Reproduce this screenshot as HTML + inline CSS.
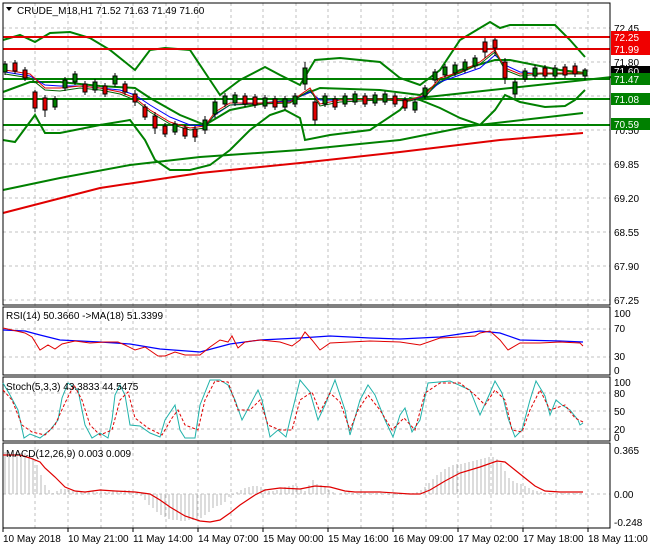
<!DOCTYPE html>
<html><head><style>
body{margin:0;background:#fff;}
svg{display:block;font-family:"Liberation Sans",sans-serif;font-size:10px;}
</style></head><body>
<svg width="650" height="550" xmlns="http://www.w3.org/2000/svg">
<rect width="650" height="550" fill="#fff"/>
<g stroke="#c0c0c0" stroke-dasharray="3,3" stroke-width="1">
<path d="M35 3V528M68 3V528M101 3V528M133 3V528M166 3V528M198 3V528M231 3V528M263 3V528M296 3V528M328 3V528M361 3V528M393 3V528M426 3V528M458 3V528M491 3V528M523 3V528M556 3V528M588 3V528"/>
<path d="M3 28H610M3 62H610M3 96H610M3 130H610M3 164H610M3 198H610M3 232H610M3 266H610M3 300H610"/>
<path d="M3 329H610M3 357H610M3 393H610M3 411H610M3 429H610M3 494H610"/>
</g>
<g fill="none" stroke-width="2">
<polyline stroke="#e00000" points="3,213 100,188 200,173 300,163 400,152 500,140 583,133"/>
<polyline stroke="#008000" points="3,190 60,178 130,165 200,157 300,150 400,140 470,126 583,113"/>
<polyline stroke="#008000" points="400,100 612,77"/>
<polyline stroke="#008000" points="3,40 20,35 35,42 50,33 70,32 90,38 110,50 135,70 150,50 165,48 190,50 210,80 220,95 240,80 265,67 280,75 300,85 315,60 340,58 380,62 400,78 420,85 440,70 460,40 480,28 490,22 500,28 510,25 555,25 570,40 585,57"/>
<polyline stroke="#008000" points="3,140 15,142 35,115 45,133 60,133 100,125 130,120 145,140 155,160 170,170 190,170 210,165 230,150 250,130 270,115 285,110 300,118 305,140 330,135 370,130 400,110 410,98 420,100 440,108 460,118 480,125 495,110 505,95 520,102 545,107 565,106 575,100 585,90"/>
<polyline stroke="#008000" points="3,92 30,82 60,82 100,86 135,88 150,98 180,115 205,125 230,110 260,104 290,100 320,88 380,90 420,95 460,70 495,60 510,60 560,70 585,73"/>
<path stroke="#e00000" stroke-width="2" d="M3 37H610M3 49H610"/>
<path stroke="#008000" stroke-width="2" d="M3 79H610M3 99H610M3 125H610"/>
<polyline stroke="#0000ff" stroke-width="1" points="5,72 30,76 45,85 60,86 80,86 100,88 120,90 135,95 150,105 170,117 190,125 205,126 215,115 230,105 260,103 290,101 310,92 320,100 340,100 380,99 410,100 425,96 440,82 460,75 480,68 495,55 505,65 520,72 540,74 583,74"/>
<polyline stroke="#e00000" stroke-width="1" points="5,70 30,74 45,88 60,88 80,86 100,88 120,92 135,98 150,110 170,122 190,128 205,126 215,112 230,103 260,103 290,102 310,88 320,104 340,100 380,99 410,100 425,95 440,78 460,72 480,62 495,50 505,68 520,74 540,73 583,73"/>
<polyline stroke="#006400" stroke-width="1" points="5,74 30,78 45,90 60,91 80,88 100,90 120,94 135,100 150,112 170,124 190,130 205,128 215,114 230,105 260,104 290,103 310,90 320,106 340,102 380,100 410,101 425,97 440,80 460,73 480,64 495,52 505,70 520,76 540,74 583,74"/>
</g>
<g stroke="#000" stroke-width="1">
<path d="M5 61V75M15 60V74M25 67V81M35 90V112M45 95V117M55 96V110M65 77V91M75 71V85M85 81V95M95 79V93M105 83V97M115 73V87M125 81V95M135 90V106M145 104V120M155 112V134M165 123V137M175 121V135M185 125V139M195 126V142M205 116V134M215 98V118M225 93V107M235 92V106M245 93V107M255 94V108M265 95V109M275 96V110M285 96V110M295 93V107M305 62V90M315 98V125M325 93V107M335 96V110M345 93V107M355 91V105M365 93V107M375 92V106M385 91V105M395 93V107M405 97V111M415 99V113M425 85V99M435 69V83M445 64V78M455 62V76M465 59V73M475 55V69M485 38V58M495 38V56M505 58V84M515 78V98M525 68V82M535 65V79M545 65V79M555 65V79M565 64V78M575 63V77M585 68V80"/>
</g>
<g stroke="#000" stroke-width="1">
<rect x="3" y="64" width="4" height="8" fill="#008000"/><rect x="13" y="63" width="4" height="8" fill="#e00000"/><rect x="23" y="70" width="4" height="8" fill="#e00000"/><rect x="33" y="92" width="4" height="16" fill="#e00000"/><rect x="43" y="98" width="4" height="12" fill="#e00000"/><rect x="53" y="99" width="4" height="8" fill="#008000"/><rect x="63" y="80" width="4" height="8" fill="#008000"/><rect x="73" y="74" width="4" height="8" fill="#008000"/><rect x="83" y="84" width="4" height="8" fill="#e00000"/><rect x="93" y="82" width="4" height="8" fill="#008000"/><rect x="103" y="86" width="4" height="8" fill="#e00000"/><rect x="113" y="76" width="4" height="8" fill="#008000"/><rect x="123" y="84" width="4" height="8" fill="#e00000"/><rect x="133" y="94" width="4" height="8" fill="#e00000"/><rect x="143" y="107" width="4" height="10" fill="#e00000"/><rect x="153" y="116" width="4" height="12" fill="#e00000"/><rect x="163" y="126" width="4" height="8" fill="#e00000"/><rect x="173" y="124" width="4" height="8" fill="#008000"/><rect x="183" y="128" width="4" height="8" fill="#e00000"/><rect x="193" y="129" width="4" height="8" fill="#e00000"/><rect x="203" y="120" width="4" height="10" fill="#008000"/><rect x="213" y="102" width="4" height="12" fill="#008000"/><rect x="223" y="96" width="4" height="8" fill="#008000"/><rect x="233" y="95" width="4" height="8" fill="#008000"/><rect x="243" y="96" width="4" height="8" fill="#e00000"/><rect x="253" y="97" width="4" height="8" fill="#e00000"/><rect x="263" y="98" width="4" height="8" fill="#008000"/><rect x="273" y="99" width="4" height="8" fill="#e00000"/><rect x="283" y="99" width="4" height="8" fill="#008000"/><rect x="293" y="96" width="4" height="8" fill="#008000"/><rect x="303" y="68" width="4" height="16" fill="#008000"/><rect x="313" y="102" width="4" height="18" fill="#e00000"/><rect x="323" y="96" width="4" height="8" fill="#008000"/><rect x="333" y="99" width="4" height="8" fill="#e00000"/><rect x="343" y="96" width="4" height="8" fill="#008000"/><rect x="353" y="94" width="4" height="8" fill="#008000"/><rect x="363" y="96" width="4" height="8" fill="#e00000"/><rect x="373" y="95" width="4" height="8" fill="#008000"/><rect x="383" y="94" width="4" height="8" fill="#008000"/><rect x="393" y="96" width="4" height="8" fill="#e00000"/><rect x="403" y="100" width="4" height="8" fill="#e00000"/><rect x="413" y="102" width="4" height="8" fill="#008000"/><rect x="423" y="88" width="4" height="8" fill="#008000"/><rect x="433" y="72" width="4" height="8" fill="#008000"/><rect x="443" y="67" width="4" height="8" fill="#008000"/><rect x="453" y="65" width="4" height="8" fill="#008000"/><rect x="463" y="62" width="4" height="8" fill="#008000"/><rect x="473" y="58" width="4" height="8" fill="#008000"/><rect x="483" y="42" width="4" height="10" fill="#e00000"/><rect x="493" y="40" width="4" height="8" fill="#e00000"/><rect x="503" y="62" width="4" height="16" fill="#e00000"/><rect x="513" y="82" width="4" height="12" fill="#008000"/><rect x="523" y="71" width="4" height="8" fill="#008000"/><rect x="533" y="68" width="4" height="8" fill="#008000"/><rect x="543" y="68" width="4" height="8" fill="#e00000"/><rect x="553" y="68" width="4" height="8" fill="#008000"/><rect x="563" y="67" width="4" height="8" fill="#e00000"/><rect x="573" y="66" width="4" height="8" fill="#e00000"/><rect x="583" y="70" width="4" height="6" fill="#008000"/>
</g>
<path d="M3 3H610V305H3Z" fill="none" stroke="#000"/>
<path d="M6 7l3 4 3-4z" fill="#000"/>
<text x="17" y="14" font-size="10">CRUDE_M18,H1  71.52 71.63 71.49 71.60</text>
<g font-size="10" fill="#000">
<text x="614" y="32">72.45</text>
<text x="614" y="66">71.80</text>
<text x="614" y="168">69.85</text>
<text x="614" y="202">69.20</text>
<text x="614" y="236">68.55</text>
<text x="614" y="270">67.90</text>
<text x="614" y="304">67.25</text>
<text x="614" y="134">70.50</text>
</g>
<rect x="611" y="31" width="39" height="12" fill="#f00000"/><text x="614" y="41" fill="#fff">72.25</text>
<rect x="611" y="43" width="39" height="12" fill="#f00000"/><text x="614" y="53" fill="#fff">71.99</text>
<rect x="611" y="66" width="39" height="11" fill="#000"/><text x="614" y="75" fill="#fff">71.60</text>
<rect x="611" y="73" width="39" height="12" fill="#008000"/><text x="614" y="83" fill="#fff">71.47</text>
<rect x="611" y="93" width="39" height="12" fill="#008000"/><text x="614" y="103" fill="#fff">71.08</text>
<rect x="611" y="118" width="39" height="12" fill="#008000"/><text x="614" y="128" fill="#fff">70.59</text>

<!-- RSI -->
<path d="M3 307H610V375H3Z" fill="none" stroke="#000"/>
<text x="6" y="319">RSI(14) 50.3660  -&gt;MA(18) 51.3399</text>
<polyline fill="none" stroke="#0000ff" stroke-width="1.2" points="3,330 25,331 40,335 60,340 100,342 130,344 160,349 200,352 230,344 260,340 300,338 330,336 370,338 400,339 440,337 480,331 500,333 520,340 560,341 583,342"/>
<polyline fill="none" stroke="#e00000" stroke-width="1" points="3,328 12,330 25,333 32,337 40,350 48,345 55,349 62,344 75,341 90,343 105,342 118,342 125,345 135,350 145,347 158,356 165,356 175,352 185,355 200,355 210,347 220,340 228,342 232,336 238,348 245,342 260,340 280,342 292,346 300,340 305,332 312,340 320,350 330,343 350,342 370,341 400,342 420,345 440,338 460,337 475,336 480,333 490,331 500,340 508,350 520,343 540,343 560,342 580,343 583,346"/>
<g font-size="10"><text x="614" y="317">100</text><text x="614" y="332">70</text><text x="614" y="360">30</text><text x="614" y="374">0</text></g>

<!-- Stoch -->
<path d="M3 377H610V441H3Z" fill="none" stroke="#000"/>
<polyline fill="none" stroke="#20b2aa" stroke-width="1" points="3,383 10,395 18,410 24,438 30,434 40,438 50,430 58,420 62,398 68,383 78,390 85,425 92,438 100,433 108,438 112,420 115,395 120,385 125,395 130,425 140,426 150,433 160,437 165,420 175,405 180,430 185,438 195,438 200,405 210,380 220,380 228,385 235,400 242,420 250,405 258,390 262,400 270,437 278,430 286,437 290,420 300,380 310,392 318,420 325,405 335,380 345,410 350,435 360,400 368,385 375,395 385,420 393,437 400,415 405,408 412,432 420,420 428,383 450,381 470,390 480,415 490,393 495,381 502,393 508,418 515,437 522,430 530,400 536,381 545,396 550,415 556,400 562,405 570,410 578,420 580,425 583,423"/>
<polyline fill="none" stroke="#e00000" stroke-width="1" stroke-dasharray="3,2" points="3,390 12,400 22,425 32,432 45,435 55,425 65,403 74,385 82,400 90,425 100,435 112,430 120,400 128,392 135,418 148,428 162,435 172,418 178,410 185,425 198,430 205,400 215,381 228,382 238,410 250,410 260,400 268,425 280,430 292,430 300,400 312,392 320,412 330,393 340,402 350,430 358,410 368,395 380,410 392,430 404,418 415,430 425,393 440,383 460,383 475,395 485,405 495,390 505,400 512,430 522,432 530,410 540,390 550,410 565,405 575,418 583,422"/>
<g font-size="10"><text x="614" y="386">100</text><text x="614" y="397">80</text><text x="614" y="415">50</text><text x="614" y="433">20</text><text x="614" y="441">0</text></g>
<text x="6" y="390">Stoch(5,3,3) 43.3833 44.5475</text>

<!-- MACD -->
<path d="M3 443H610V528H3Z" fill="none" stroke="#000"/>
<g stroke="#b8b8b8" stroke-width="1">
<path d="M5 494V452M9 494V452M13 494V452M17 494V452M21 494V453M25 494V453M29 494V455M33 494V458M37 494V465M41 494V475M45 494V485M49 494V490M53 494V493M57 494V491M61 494V489M65 494V489M69 494V490M73 494V490M77 494V491M81 494V491M85 494V492M89 494V492M93 494V491M97 494V492M101 494V492M105 494V492M109 494V492M113 494V491M117 494V491M121 494V491M125 494V490M129 494V490M133 494V491M137 494V493M141 494V496M145 494V500M149 494V505M153 494V508M157 494V512M161 494V515M165 494V517M169 494V519M173 494V520M177 494V520M181 494V521M185 494V521M189 494V520M193 494V520M197 494V519M201 494V518M205 494V515M209 494V512M213 494V508M217 494V506M221 494V505M225 494V502M229 494V497M233 494V495M237 494V492M241 494V490M245 494V488M249 494V487M253 494V486M257 494V486M261 494V487M265 494V489M269 494V491M273 494V491M277 494V490M281 494V489M285 494V487M289 494V486M293 494V485M297 494V486M301 494V489M305 494V491M309 494V485M313 494V480M317 494V484M321 494V485M325 494V487M329 494V490M333 494V492M337 494V494M341 494V493M345 494V492M349 494V492M353 494V493M357 494V493M361 494V492M365 494V492M369 494V493M373 494V493M377 494V493M381 494V493M385 494V493M389 494V495M393 494V496M397 494V495M401 494V493M405 494V493M409 494V493M413 494V493M417 494V492M421 494V490M425 494V487M429 494V483M433 494V479M437 494V475M441 494V472M445 494V469M449 494V467M453 494V465M457 494V464M461 494V464M465 494V463M469 494V462M473 494V461M477 494V460M481 494V459M485 494V458M489 494V457M493 494V457M497 494V459M501 494V463M505 494V471M509 494V478M513 494V481M517 494V483M521 494V484M525 494V486M529 494V488M533 494V490M537 494V491M541 494V492M545 494V493M549 494V493M553 494V493M557 494V493M561 494V493M565 494V493M569 494V493M573 494V493M577 494V493M581 494V493"/>
</g>
<polyline fill="none" stroke="#e00000" stroke-width="1.2" points="3,455 20,455 30,458 40,462 45,468 55,477 65,487 75,491 85,492 100,490 115,491 135,492 150,494 160,500 170,507 185,516 200,521 210,522 220,520 230,513 240,505 255,495 265,490 280,488 300,489 315,486 330,487 345,491 355,492 380,492 410,494 420,494 430,490 445,481 460,473 480,467 497,461 505,462 515,470 525,478 535,486 545,491 560,492 583,492"/>
<text x="6" y="457">MACD(12,26,9) 0.003 0.009</text>
<g font-size="10"><text x="614" y="454">0.365</text><text x="614" y="498">0.00</text><text x="614" y="526">-0.248</text></g>

<!-- dates -->
<g font-size="10"><text x="3" y="542">10 May 2018</text><text x="68" y="542">10 May 21:00</text><text x="133" y="542">11 May 14:00</text><text x="198" y="542">14 May 07:00</text><text x="263" y="542">15 May 00:00</text><text x="328" y="542">15 May 16:00</text><text x="393" y="542">16 May 09:00</text><text x="458" y="542">17 May 02:00</text><text x="523" y="542">17 May 18:00</text><text x="588" y="542">18 May 11:00</text></g>
<path d="M3 528v4M68 528v4M133 528v4M198 528v4M263 528v4M328 528v4M393 528v4M458 528v4M523 528v4M588 528v4" stroke="#000"/>
</svg>
</body></html>
